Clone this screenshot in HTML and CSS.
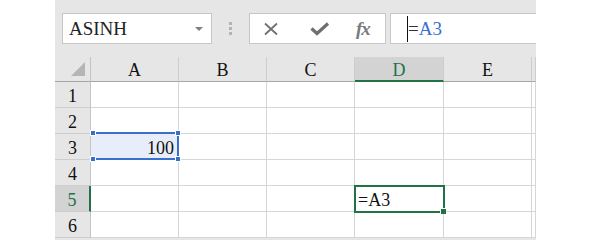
FILE: index.html
```html
<!DOCTYPE html>
<html lang="en">
<head>
    <meta charset="UTF-8">
    <title>Sheet</title>
    <link rel="stylesheet" href="styles.css">
</head>
<body>
    <div class="app">
        <div class="toolbar">
            <div class="name-box">
                <span>ASINH</span>
                <span class="caret"></span>
            </div>
            <div class="grip"><i></i><i></i><i></i></div>
            <div class="buttons">
                <svg class="icon" width="16" height="14" viewBox="0 0 16 14">
                    <path d="M2 1.5 L14 12.5 M14 1.5 L2 12.5" stroke="#6f6f6f" stroke-width="1.8" fill="none"/>
                </svg>
                <svg class="icon" width="20" height="14" viewBox="0 0 20 14">
                    <path d="M1.5 6.5 L7 11.5 L18 1.5" stroke="#6f6f6f" stroke-width="3.2" fill="none"/>
                </svg>
                <span class="fx">fx</span>
            </div>
            <div class="formula">
                <span class="cursor"></span><span class="eq">=</span><span class="ref">A3</span>
            </div>
        </div>

        <div class="sheet">
            <div class="corner"><span class="tri"></span></div>
            <div class="col-head">A</div>
            <div class="col-head">B</div>
            <div class="col-head">C</div>
            <div class="col-head active">D</div>
            <div class="col-head">E</div>
            <div class="col-head"></div>

            <div class="row-head">1</div>
            <div class="cell"></div><div class="cell"></div><div class="cell"></div><div class="cell"></div><div class="cell"></div><div class="cell"></div>

            <div class="row-head">2</div>
            <div class="cell"></div><div class="cell"></div><div class="cell"></div><div class="cell"></div><div class="cell"></div><div class="cell"></div>

            <div class="row-head">3</div>
            <div class="cell num picked">
                100
                <span class="pick-frame"></span>
                <span class="dot tl"></span><span class="dot tr"></span>
                <span class="dot bl"></span><span class="dot br"></span>
            </div>
            <div class="cell"></div><div class="cell"></div><div class="cell"></div><div class="cell"></div><div class="cell"></div>

            <div class="row-head">4</div>
            <div class="cell"></div><div class="cell"></div><div class="cell"></div><div class="cell"></div><div class="cell"></div><div class="cell"></div>

            <div class="row-head active">5</div>
            <div class="cell"></div><div class="cell"></div><div class="cell"></div>
            <div class="cell current">=A3<span class="handle"></span></div>
            <div class="cell"></div><div class="cell"></div>

            <div class="row-head">6</div>
            <div class="cell"></div><div class="cell"></div><div class="cell"></div><div class="cell"></div><div class="cell"></div><div class="cell"></div>
        </div>
    </div>
</body>
</html>
```

FILE: styles.css
```css
body {
    margin: 0;
    background-color: white;
    font-family: "Liberation Serif", "Times New Roman", "DejaVu Serif", "Noto Serif", serif;
}

.app {
    margin-left: 55px;
    width: 481px;
    height: 240px;
    background-color: #e6e6e6;
    overflow: hidden;
}

/* formula bar */

.toolbar {
    display: flex;
    align-items: center;
    padding-top: 13px;
    height: 31px;
}

.name-box {
    box-sizing: border-box;
    width: 150px;
    height: 31px;
    margin-left: 7px;
    background-color: white;
    border: 1px solid #c6c6c6;
    display: flex;
    align-items: center;
    justify-content: space-between;
    padding: 1px 8px 0 6px;
    font-size: 19px;
    color: #222;
}

.caret {
    width: 0;
    height: 0;
    border-left: 4px solid transparent;
    border-right: 4px solid transparent;
    border-top: 4px solid #808080;
}

.grip {
    width: 37px;
    display: flex;
    flex-direction: column;
    align-items: center;
    gap: 2px;
}

.grip i {
    display: block;
    width: 3px;
    height: 3px;
    background-color: #b4b4b4;
}

.buttons {
    box-sizing: border-box;
    width: 137px;
    height: 31px;
    background-color: white;
    border: 1px solid #c6c6c6;
    display: flex;
    align-items: center;
    padding-left: 13px;
}

.buttons .icon + .icon {
    margin-left: 31px;
}

.fx {
    margin-left: 26px;
    font-style: italic;
    font-size: 19px;
    color: #7a7a7a;
    font-weight: bold;
    letter-spacing: -1px;
}

.formula {
    box-sizing: border-box;
    flex: 1;
    height: 31px;
    margin-left: 4px;
    background-color: white;
    border: 1px solid #c6c6c6;
    border-right: none;
    display: flex;
    align-items: center;
    padding-left: 16px;
    font-size: 19px;
}

.cursor {
    width: 1px;
    height: 26px;
    background-color: #111;
}

.eq {
    color: #333;
}

.ref {
    color: #3a6fd2;
}

/* grid */

.sheet {
    margin-top: 13px;
    display: grid;
    grid-template-columns: 36px 88px 88px 88px 89px 88px 4px;
    grid-template-rows: 25px repeat(6, 26px);
    font-size: 18px;
    color: #111;
}

.corner {
    position: relative;
    border-right: 1px solid #c4c4c4;
    border-bottom: 1px solid #a6a6a6;
}

.tri {
    position: absolute;
    right: 5px;
    bottom: 5px;
    width: 14px;
    height: 14px;
    background-color: #b5b5b5;
    clip-path: polygon(100% 0, 100% 100%, 0 100%);
}

.col-head {
    box-sizing: border-box;
    display: flex;
    align-items: center;
    justify-content: center;
    padding-top: 3px;
    border-right: 1px solid #cdcdcd;
    border-bottom: 1px solid #a6a6a6;
}

.col-head.active {
    background-color: #d3d3d3;
    color: #217346;
    border-bottom: 2px solid #217346;
    padding-top: 4px;
}

.row-head {
    box-sizing: border-box;
    display: flex;
    align-items: center;
    justify-content: center;
    padding-top: 4px;
    border-right: 1px solid #c4c4c4;
    border-bottom: 1px solid #cdcdcd;
}

.row-head.active {
    background-color: #d3d3d3;
    color: #217346;
    border-right: 2px solid #217346;
}

.cell {
    box-sizing: border-box;
    background-color: white;
    border-right: 1px solid #d6d6d6;
    border-bottom: 1px solid #d6d6d6;
    display: flex;
    align-items: center;
    padding-top: 4px;
}

.cell.num {
    justify-content: flex-end;
    padding-right: 4px;
}

/* selection on A3 */

.picked {
    position: relative;
    background-color: #e8eef9;
}

.pick-frame {
    position: absolute;
    left: 1px;
    right: -1px;
    top: -2px;
    bottom: -1px;
    border-top: 2px solid #3b6fcc;
    border-bottom: 2px solid #3b6fcc;
    border-right: 2px solid #3b6fcc;
}

.dot {
    position: absolute;
    width: 4px;
    height: 4px;
    background-color: #3b6fcc;
    border: 1px solid white;
}

.dot.tl { left: -1px; top: -4px; }
.dot.tr { right: -3px; top: -4px; }
.dot.bl { left: -1px; bottom: -3px; }
.dot.br { right: -3px; bottom: -3px; }

/* active cell D5 */

.current {
    position: relative;
    padding-left: 3px;
    outline: 2px solid #217346;
    outline-offset: -1px;
    z-index: 1;
}

.handle {
    position: absolute;
    right: -3px;
    bottom: -3px;
    width: 5px;
    height: 5px;
    background-color: #217346;
    border-left: 1px solid white;
    border-top: 1px solid white;
}
```
